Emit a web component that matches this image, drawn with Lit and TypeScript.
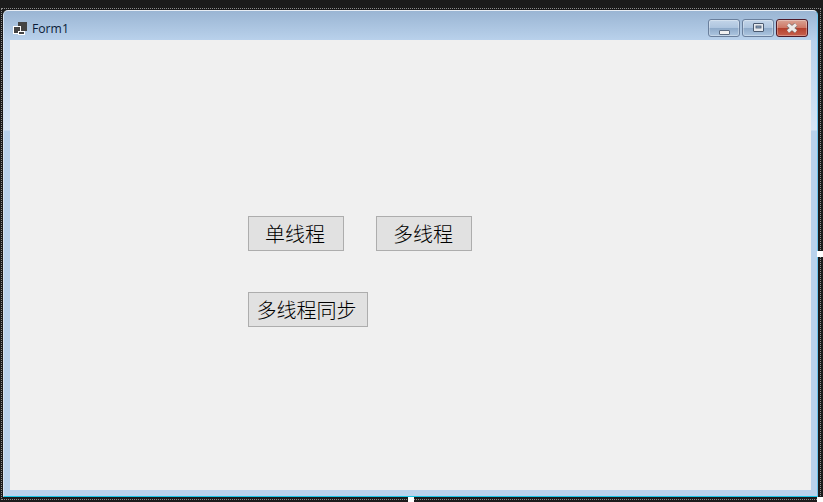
import { LitElement, html, css } from "lit";
import { customElement } from "lit/decorators.js";

@customElement("app-root")
export class AppRoot extends LitElement {
  static styles = css`
    :host {
      display: block;
      position: relative;
      width: 823px;
      height: 502px;
      overflow: hidden;
      background: #1b1b1b;
      font-family: "Open Sans", "Noto Sans", sans-serif;
    }
    .shell {
      box-sizing: border-box;
      width: 823px;
      height: 502px;
      padding: 10px 5px 5px 3px;
    }
    .window {
      box-sizing: border-box;
      height: 487px;
      display: flex;
      flex-direction: column;
      border-radius: 5px 5px 0 0;
      border-top: 1px solid #e8eef5;
      border-left: 1px solid #d5e2f0;
      border-right: 1px solid #6cc4ec;
      border-bottom: 1px solid #18c4e4;
      background: linear-gradient(
        180deg,
        #9ab5d3 0,
        #bad2ec 30px,
        #d8e6f5 119px,
        #b9d2ec 120px,
        #b9d2ec 100%
      );
      padding: 0 6px 6px 6px;
    }
    .title {
      box-sizing: border-box;
      height: 29px;
      flex: none;
      display: flex;
      align-items: center;
      padding: 5px 0 0 3px;
      gap: 5px;
      font-size: 12.2px;
      color: #0b1c38;
    }
    .title svg {
      display: block;
    }
    .spacer {
      flex: 1;
    }
    .ctrls {
      display: flex;
      gap: 2px;
      margin-right: 3px;
    }
    .ctrl {
      box-sizing: border-box;
      width: 32px;
      height: 18px;
      border: 1px solid #6a7f9c;
      border-radius: 3px;
      display: flex;
      align-items: center;
      justify-content: center;
      background: linear-gradient(180deg, #c3d5e9 0, #adc4de 50%, #8fabca 52%, #adc6e0 100%);
      box-shadow: inset 0 0 0 1px rgba(255, 255, 255, 0.3);
    }
    .ctrl.min svg {
      margin-top: 8px;
    }
    .ctrl.max svg {
      margin-top: -1px;
    }
    .ctrl.close {
      border-color: #4e1a28;
      background: linear-gradient(180deg, #d9a394 0, #cd7563 50%, #b4402d 52%, #c7614e 100%);
    }
    .ctrl.close svg {
      margin-top: -1px;
    }
    .form {
      flex: 1;
      background: #f0f0f0;
      box-sizing: border-box;
      padding: 176px 0 0 238px;
      display: flex;
      flex-direction: column;
      align-items: flex-start;
      gap: 41px;
    }
    .row {
      display: flex;
      gap: 32px;
    }
    .btn {
      box-sizing: border-box;
      width: 96px;
      height: 35px;
      padding: 0 2px 0 0;
      margin: 0;
      background: #e1e1e1;
      border: 1px solid #adadad;
      color: #000;
      font-family: "Noto Sans CJK SC", sans-serif;
      font-size: 20px;
      font-weight: 300;
      line-height: 31px;
      text-align: center;
    }
    .btn.wide {
      width: 120px;
      padding-right: 3px;
    }
    .dots {
      position: absolute;
      left: 1px;
      top: 8px;
      width: 818px;
      height: 490px;
      border: 1px dotted #8c8c8c;
      pointer-events: none;
    }
    .handle {
      position: absolute;
      background: #fff;
    }
    .h-r {
      left: 817px;
      top: 251px;
      width: 6px;
      height: 6px;
    }
    .h-b {
      left: 408px;
      top: 497px;
      width: 6px;
      height: 5px;
    }
    .h-c {
      left: 817px;
      top: 497px;
      width: 6px;
      height: 5px;
    }
  `;

  render() {
    return html`
      <div class="shell">
        <div class="window">
          <div class="title">
            <svg width="14" height="13" viewBox="0 0 14 13">
              <rect x="5" y="0" width="9" height="9" fill="#444" />
              <rect x="0.5" y="4.5" width="7" height="7" fill="#444" stroke="#fff" />
              <rect x="5.5" y="9.5" width="6" height="3" fill="#444" stroke="#fff" />
            </svg>
            <span>Form1</span>
            <span class="spacer"></span>
            <div class="ctrls">
              <div class="ctrl min">
                <svg width="11" height="5" viewBox="0 0 11 5">
                  <rect x="0.5" y="0.5" width="10" height="4" rx="0.5" fill="#f0f0f0" stroke="#5a6a80" />
                </svg>
              </div>
              <div class="ctrl max">
                <svg width="11" height="9" viewBox="0 0 11 9">
                  <rect x="0.5" y="0.5" width="10" height="8" rx="0.5" fill="#e6eaef" stroke="#4a5a70" />
                  <rect x="3" y="3" width="5" height="2" fill="#8ea6c2" stroke="#4a5a70" stroke-width="0.8" />
                </svg>
              </div>
              <div class="ctrl close">
                <svg width="12" height="10" viewBox="0 0 12 10">
                  <path d="M2 1.5 L10 8.5 M10 1.5 L2 8.5" stroke="#7a6a68" stroke-width="4.4" fill="none" />
                  <path d="M2 1.5 L10 8.5 M10 1.5 L2 8.5" stroke="#eeeae8" stroke-width="3" fill="none" />
                </svg>
              </div>
            </div>
          </div>
          <div class="form">
            <div class="row">
              <button class="btn">单线程</button>
              <button class="btn">多线程</button>
            </div>
            <button class="btn wide">多线程同步</button>
          </div>
        </div>
      </div>
      <div class="dots"></div>
      <div class="handle h-r"></div>
      <div class="handle h-b"></div>
      <div class="handle h-c"></div>
    `;
  }
}
